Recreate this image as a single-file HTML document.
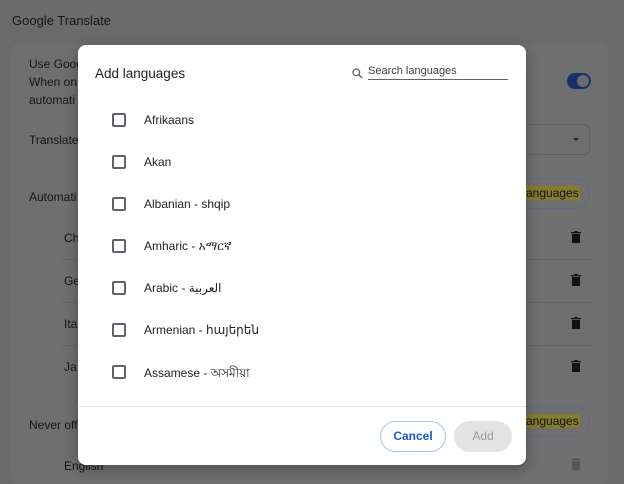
<!DOCTYPE html>
<html><head><style>
*{margin:0;padding:0;box-sizing:border-box}
body{width:624px;height:479px;overflow:hidden;background:#6b6b6b;font-family:"Liberation Sans","Noto Sans CJK SC","DejaVu Sans",sans-serif;position:relative;color:#1b1b1b}
.a{position:absolute;white-space:nowrap}
.bg{font-size:12px;color:#151515}
.card{position:absolute;left:11px;top:44px;width:597px;height:440px;background:#6f6f6f;border-radius:8px}
.pill{position:absolute;left:505px;width:85px;height:31px;border:1px solid #5d6a85;border-radius:16px}
.hl{position:absolute;background:#857c2e;color:#111;font-size:12px;padding:0 1px}
.trash{position:absolute;left:571px;width:10px;height:12px}
.div{position:absolute;left:62px;width:530px;height:1px;background:#646464}
.dlg{position:absolute;left:78px;top:45px;width:448px;height:420px;background:#fff;border-radius:8px;box-shadow:0 4px 14px rgba(0,0,0,.3)}
.cb{position:absolute;left:34px;width:14px;height:14px;border:2px solid #5f6368;border-radius:2px}
.lbl{position:absolute;left:66px;font-size:12px;color:#202124}
</style></head><body>
<div class="a bg" style="left:12px;top:13px;font-size:13px">Google Translate</div>
<div class="card"></div>
<div class="a bg" style="left:29px;top:57px">Use Goog</div>
<div class="a bg" style="left:29px;top:75px">When on</div>
<div class="a bg" style="left:29px;top:93px">automati</div>
<div class="a" style="left:567px;top:73px;width:24px;height:16px;border-radius:8px;background:#1a2f6e"></div>
<div class="a" style="left:577px;top:75px;width:12px;height:12px;border-radius:50%;background:#6c6c6c"></div>
<div class="a bg" style="left:29px;top:133px">Translate</div>
<div class="a" style="left:505px;top:124px;width:85px;height:31px;border:1px solid #5f5f5f;border-radius:6px"></div>
<div class="a" style="left:573px;top:138px;border-left:3px solid transparent;border-right:3px solid transparent;border-top:3px solid #222"></div>
<div class="a bg" style="left:29px;top:190px">Automati</div>
<div class="pill" style="top:178px"></div>
<div class="hl" style="left:525px;top:186px">anguages</div>
<div class="a bg" style="left:64px;top:231px">Ch</div>
<div class="a bg" style="left:64px;top:274px">Ge</div>
<div class="a bg" style="left:64px;top:317px">Ita</div>
<div class="a bg" style="left:64px;top:360px">Ja</div>
<div class="div" style="top:259px"></div><div class="div" style="top:302px"></div><div class="div" style="top:345px"></div>
<svg class="trash" style="top:231px" viewBox="0 0 10 12"><path d="M0 1h10v1.3H0zM3.3 0h3.4v1H3.3zM1 3h8v8.5a.5.5 0 0 1-.5.5h-7a.5.5 0 0 1-.5-.5z" fill="#111"/></svg>
<svg class="trash" style="top:274px" viewBox="0 0 10 12"><path d="M0 1h10v1.3H0zM3.3 0h3.4v1H3.3zM1 3h8v8.5a.5.5 0 0 1-.5.5h-7a.5.5 0 0 1-.5-.5z" fill="#111"/></svg>
<svg class="trash" style="top:317px" viewBox="0 0 10 12"><path d="M0 1h10v1.3H0zM3.3 0h3.4v1H3.3zM1 3h8v8.5a.5.5 0 0 1-.5.5h-7a.5.5 0 0 1-.5-.5z" fill="#111"/></svg>
<svg class="trash" style="top:360px" viewBox="0 0 10 12"><path d="M0 1h10v1.3H0zM3.3 0h3.4v1H3.3zM1 3h8v8.5a.5.5 0 0 1-.5.5h-7a.5.5 0 0 1-.5-.5z" fill="#111"/></svg>
<svg class="trash" style="top:458px" viewBox="0 0 10 12"><path d="M0 1h10v1.3H0zM3.3 0h3.4v1H3.3zM1 3h8v8.5a.5.5 0 0 1-.5.5h-7a.5.5 0 0 1-.5-.5z" fill="#555"/></svg>
<div class="a bg" style="left:29px;top:418px">Never off</div>
<div class="pill" style="top:406px"></div>
<div class="hl" style="left:525px;top:414px">anguages</div>
<div class="a bg" style="left:64px;top:459px">English</div>

<div class="dlg">
<div class="a" style="left:17px;top:21px;font-size:13.5px;color:#202124">Add languages</div>
<svg class="a" style="left:274px;top:23px" width="11" height="11" viewBox="0 0 11 11"><circle cx="4.3" cy="4.3" r="3.3" fill="none" stroke="#5f6368" stroke-width="1.3"/><path d="M6.8 6.8L10 10" stroke="#5f6368" stroke-width="1.4"/></svg>
<div class="a" style="left:290px;top:20px;font-size:11px;color:#3c4043">Search languages</div>
<div class="a" style="left:290px;top:34px;width:140px;height:1px;background:#5f6368"></div>
<div class="cb" style="top:68px"></div><div class="lbl" style="top:68px">Afrikaans</div>
<div class="cb" style="top:110px"></div><div class="lbl" style="top:110px">Akan</div>
<div class="cb" style="top:152px"></div><div class="lbl" style="top:152px">Albanian - shqip</div>
<div class="cb" style="top:194px"></div><div class="lbl" style="top:194px">Amharic - አማርኛ</div>
<div class="cb" style="top:236px"></div><div class="lbl" style="top:236px">Arabic - العربية</div>
<div class="cb" style="top:278px"></div><div class="lbl" style="top:278px">Armenian - հայերեն</div>
<div class="cb" style="top:320px"></div><div class="lbl" style="top:320px">Assamese - অসমীয়া</div>
<div class="a" style="left:0;top:361px;width:448px;height:1px;background:#e3e3e3"></div>
<div class="a" style="left:302px;top:376px;width:66px;height:31px;border:1px solid #a8c0f0;border-radius:16px;color:#1a56d6;font-size:12px;font-weight:bold;text-align:center;line-height:29px">Cancel</div>
<div class="a" style="left:376px;top:376px;width:58px;height:31px;background:#e3e3e3;border-radius:16px;color:#9a9a9a;font-size:12px;text-align:center;line-height:31px">Add</div>
</div>
</body></html>
